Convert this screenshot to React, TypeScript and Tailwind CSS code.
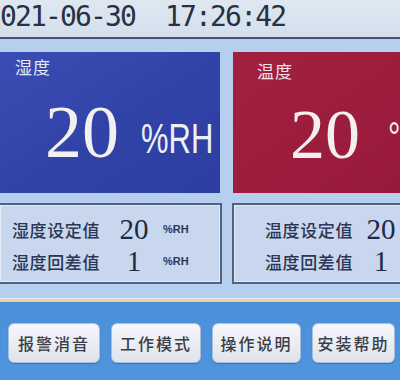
import React from "react";

const cjk = { fontFamily: '"Noto Sans CJK SC", "Noto Sans", sans-serif' };
const serif = { fontFamily: '"Liberation Serif", serif' };
const sans = { fontFamily: '"Liberation Sans", Arial, sans-serif' };
const mono = { fontFamily: '"DejaVu Sans Mono", monospace' };

function InfoRow({ label, value, unit, gap }: { label: string; value: string; unit?: string; gap: string }) {
  return (
    <div className="flex h-[32px] items-center">
      <div className="w-[90px] shrink-0 whitespace-nowrap text-[17px] font-medium leading-none tracking-[0.6px] text-[#2c3656]" style={cjk}>
        {label}
      </div>
      <div className={`${gap} w-[44px] shrink-0 text-center text-[29px] leading-none text-[#1e2946]`} style={serif}>
        {value}
      </div>
      {unit ? (
        <div className="ml-[7px] shrink-0 text-[11px] font-bold leading-none text-[#2c3656]" style={sans}>
          {unit}
        </div>
      ) : null}
    </div>
  );
}

export default function App() {
  const buttons = [
    { t: "报警消音", w: "w-[92px]" },
    { t: "工作模式", w: "w-[90px]" },
    { t: "操作说明", w: "w-[89px]" },
    { t: "安装帮助", w: "w-[83px]" },
  ];
  return (
    <div className="flex h-[380px] w-[400px] flex-col overflow-hidden bg-[#b6cfef]">
      {/* top bar */}
      <div className="h-[39px] shrink-0 border-b-2 border-[#43567a] bg-gradient-to-b from-[#dfe8f1] to-[#d3dfec]">
        <div
          className="ml-[-15px] whitespace-pre text-[28px] leading-[33px] tracking-[-1.85px] text-[#283044]"
          style={mono}
        >
          {"2021-06-30  17:26:42"}
        </div>
      </div>

      {/* main panels */}
      <div className="mt-[13px] flex h-[141px] shrink-0">
        <div className="flex w-[220px] shrink-0 flex-col overflow-hidden bg-gradient-to-br from-[#3b4db4] via-[#3243a8] to-[#2d3da2]">
          <div className="ml-[15px] mt-[6px] text-[17px] leading-none tracking-[1px] text-[#e4e7f7]" style={cjk}>
            湿度
          </div>
          <div className="ml-[45px] mt-[20px] flex items-end">
            <span className="shrink-0 text-[74px] leading-[74px] text-[#f3f1f0]" style={serif}>
              20
            </span>
            <span
              className="mb-[9px] ml-[22px] shrink-0 origin-left scale-x-[0.72] whitespace-nowrap text-[43px] leading-none text-[#eef0f8]"
              style={sans}
            >
              %RH
            </span>
          </div>
        </div>
        <div className="ml-[13px] flex w-[200px] shrink-0 flex-col overflow-hidden bg-gradient-to-br from-[#a3203f] to-[#96193a]">
          <div className="ml-[24px] mt-[10px] text-[17px] leading-none tracking-[1px] text-[#f1e3e7]" style={cjk}>
            温度
          </div>
          <div className="ml-[57px] mt-[21px] flex items-end">
            <span className="shrink-0 text-[70px] leading-[70px] text-[#f4eeee]" style={serif}>
              20
            </span>
            <span
              className="mb-[11px] ml-[28px] shrink-0 origin-left scale-x-[0.72] whitespace-nowrap text-[43px] leading-none text-[#f4eeee]"
              style={sans}
            >
              °C
            </span>
          </div>
        </div>
      </div>

      {/* info boxes */}
      <div className="mt-[10px] flex h-[81px] shrink-0">
        <div className="ml-[-2px] h-full w-[224px] shrink-0 border-2 border-[#51617f] bg-[#c8d7ed] pl-[12px] pt-[8px] shadow-[inset_0_0_0_1px_#e3ebf7]">
          <InfoRow label="湿度设定值" value="20" unit="%RH" gap="ml-[10px]" />
          <InfoRow label="湿度回差值" value="1" unit="%RH" gap="ml-[10px]" />
        </div>
        <div className="ml-[10px] h-full w-[190px] shrink-0 border-2 border-[#51617f] bg-[#c8d7ed] pl-[31px] pt-[8px] shadow-[inset_0_0_0_1px_#e3ebf7]">
          <InfoRow label="温度设定值" value="20" unit="℃" gap="ml-[4px]" />
          <InfoRow label="温度回差值" value="1" unit="℃" gap="ml-[4px]" />
        </div>
      </div>

      {/* separator */}
      <div className="mt-[14px] h-[1px] shrink-0 bg-[#e8eef6]" />
      <div className="h-[3px] shrink-0 bg-[#f1d190]" />

      {/* button bar */}
      <div className="flex flex-1 items-start gap-[11px] bg-gradient-to-b from-[#4b8fd9] to-[#4f96de] pl-[8px] pt-[21px]">
        {buttons.map((b) => (
          <div
            key={b.t}
            className={`${b.w} flex h-[40px] shrink-0 items-center justify-center rounded-[6px] border border-[#a9bfdc] bg-gradient-to-b from-[#f6f7fb] to-[#dfe3ec] text-[16px] font-medium tracking-[2px] text-[#3a3e48] shadow-[0_1px_1px_rgba(30,50,90,0.35)]`}
            style={cjk}
          >
            {b.t}
          </div>
        ))}
      </div>
    </div>
  );
}
